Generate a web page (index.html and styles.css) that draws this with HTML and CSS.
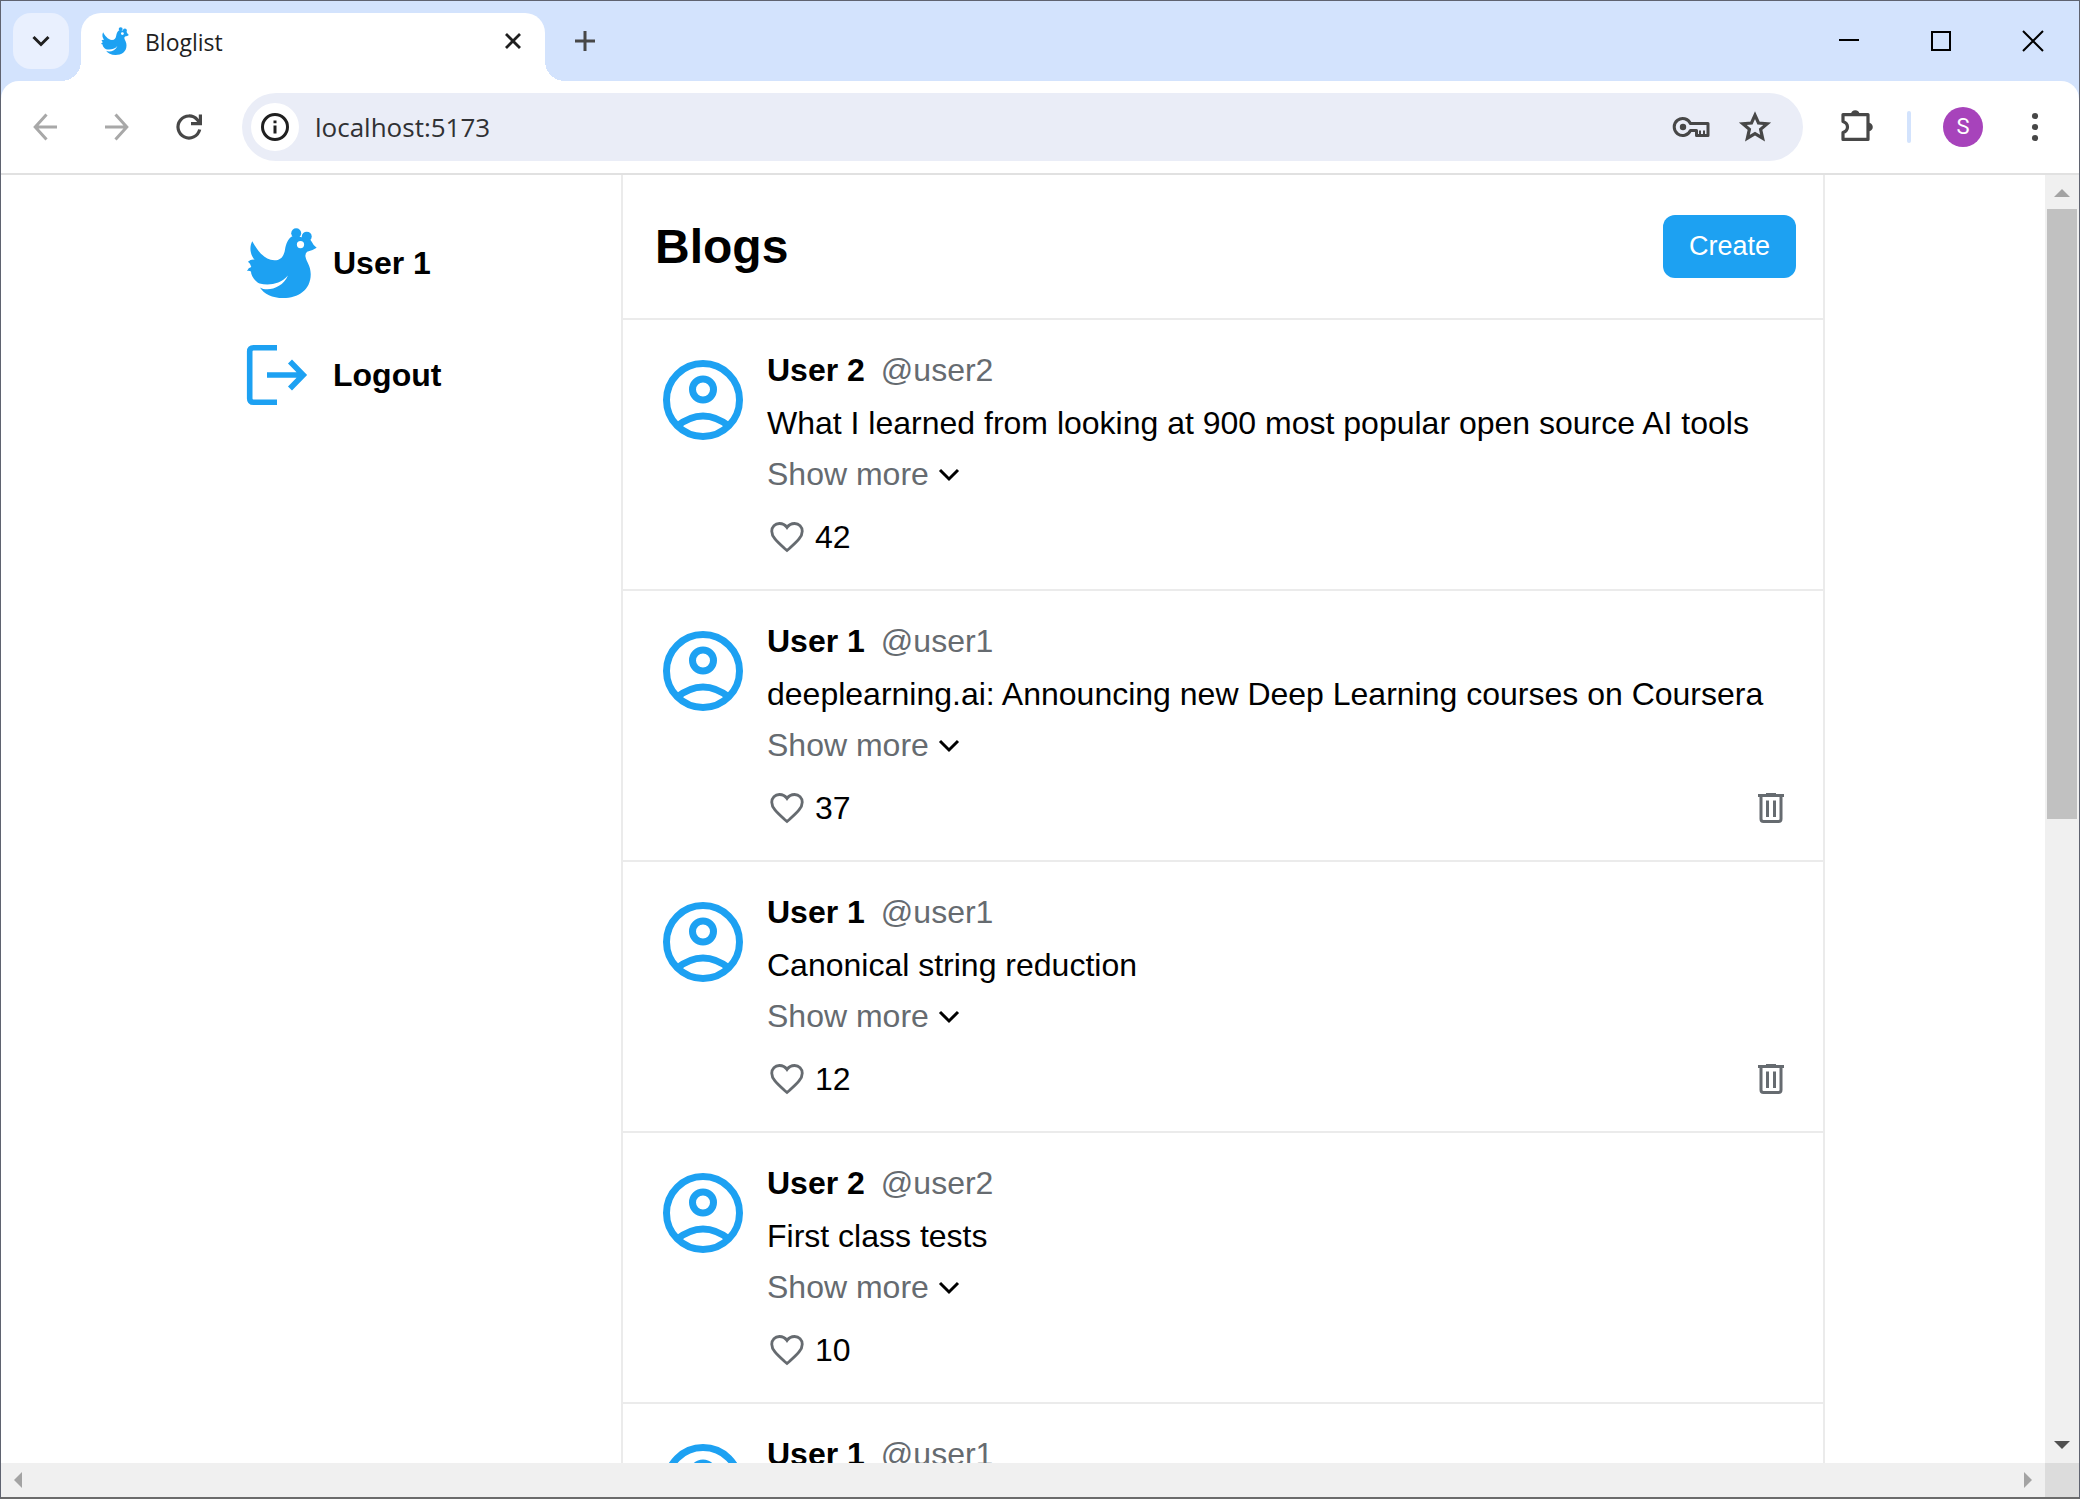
FILE: index.html
```html
<!DOCTYPE html>
<html lang="en">
<head>
<meta charset="utf-8">
<meta name="viewport" content="width=device-width, initial-scale=1">
<title>Bloglist</title>
<link rel="stylesheet" href="styles.css">
</head>
<body>
<svg class="sprite" aria-hidden="true">
  <symbol id="hen" viewBox="0 0 212 212">
    <path fill="currentColor" fill-rule="evenodd" d="M16 40C28 62 50 97 83 98C104 98 112 84 115 66C118 48 124 32 137 25L163 27L190 33Q194 38 196 42Q200 52 211 60Q200 68 182 72Q176 78 177 86C180 104 193 112 193 140C193 188 155 212 110 212C76 212 52 200 39 180C62 194 108 182 124 144C100 172 64 174 38 168C22 162 12 142 12 132Q6 128 0 130Q4 120 13 118Q10 106 3 102Q12 94 23 96C10 82 6 58 16 40ZM162 39A11 11 0 1 0 162 61A11 11 0 1 0 162 39Z"/>
    <circle cx="149" cy="16" r="15" fill="currentColor"/>
    <circle cx="181" cy="26" r="15" fill="currentColor"/>
  </symbol>
  <symbol id="logout" viewBox="0 0 80 80">
    <path fill="none" stroke="currentColor" stroke-width="5.600" d="M40 12.700H16.500Q12.700 12.700 12.700 16.500V63.500Q12.700 67.300 16.500 67.300H40M30 40H67M53 26.500L66.200 40L53 53.500"/>
  </symbol>
  <symbol id="person" viewBox="0 0 96 96">
    <g fill="none" stroke="currentColor" stroke-width="7">
      <circle cx="48" cy="48" r="36.500"/>
      <circle cx="48" cy="37.500" r="10.500"/>
      <path d="M21.500 74.500Q48 53.500 74.500 74.500"/>
    </g>
  </symbol>
  <symbol id="heart" viewBox="0 0 24 24">
    <path fill="none" stroke="currentColor" stroke-width="1.700" d="M12 20.100L10.600 18.900C5.400 14.200 2.850 11.700 2.850 8.500C2.850 5.800 4.800 3.900 7.400 3.900C9.200 3.900 11 4.800 12 6.300C13 4.800 14.800 3.900 16.600 3.900C19.200 3.900 21.150 5.800 21.150 8.500C21.150 11.700 18.600 14.200 13.400 18.900Z"/>
  </symbol>
  <symbol id="chevron" viewBox="0 0 24 24">
    <path fill="none" stroke="currentColor" stroke-width="3" d="M3 7L12 16L21 7"/>
  </symbol>
  <symbol id="trash" viewBox="0 0 40 40">
    <path fill="none" stroke="currentColor" stroke-width="3" d="M7 7.500H33M10 7.500V31Q10 33.500 12.500 33.500H27.500Q30 33.500 30 31V7.500M16.500 12.500V29M23.500 12.500V29"/>
    <path fill="currentColor" d="M15 5H25V8H15Z"/>
  </symbol>
</svg>

<div class="window">
  <header class="strip">
    <button class="tab-search" aria-label="Search tabs">
      <svg width="20" height="20" viewBox="0 0 20 20"><path fill="none" stroke="#1f1f1f" stroke-width="3" d="M2.500 6L10 13.500L17.500 6"/></svg>
    </button>
    <div class="tab">
      <svg class="favicon"><use href="#hen"/></svg>
      <span class="tab-title">Bloglist</span>
      <button class="tab-close" aria-label="Close tab">
        <svg width="16" height="16" viewBox="0 0 16 16"><path stroke="#1f1f1f" stroke-width="2.800" d="M1 1L15 15M15 1L1 15"/></svg>
      </button>
    </div>
    <button class="new-tab" aria-label="New tab">
      <svg width="20" height="20" viewBox="0 0 20 20"><path stroke="#474747" stroke-width="3" d="M10 0V20M0 10H20"/></svg>
    </button>
    <div class="window-controls">
      <button aria-label="Minimize"><svg width="20" height="20" viewBox="0 0 20 20"><path stroke="#000" stroke-width="2" d="M0 9H20"/></svg></button>
      <button aria-label="Maximize"><svg width="20" height="20" viewBox="0 0 20 20"><rect x="1" y="1" width="18" height="18" fill="none" stroke="#000" stroke-width="2"/></svg></button>
      <button aria-label="Close"><svg width="20" height="20" viewBox="0 0 20 20"><path stroke="#000" stroke-width="2" d="M0 0L20 20M20 0L0 20"/></svg></button>
    </div>
  </header>

  <div class="toolbar-wrap">
  <nav class="toolbar" aria-label="Browser">
    <button class="tool faded" aria-label="Back">
      <svg width="24" height="28" viewBox="0 0 24 28"><path fill="none" stroke="currentColor" stroke-width="3" d="M24 14H2.500M13.500 1.500L2.200 14L13.500 26.500"/></svg>
    </button>
    <button class="tool faded" aria-label="Forward">
      <svg width="24" height="28" viewBox="0 0 24 28"><path fill="none" stroke="currentColor" stroke-width="3" d="M0 14H21.500M10.500 1.500L21.800 14L10.500 26.500"/></svg>
    </button>
    <button class="tool" aria-label="Reload">
      <svg width="26" height="26" viewBox="0 0 26 26"><path fill="none" stroke="currentColor" stroke-width="3.200" d="M23.700 15.500A11 11 0 1 1 21.500 6L24 9"/><path fill="none" stroke="currentColor" stroke-width="3.200" d="M24.400 0.500V9.600H15"/></svg>
    </button>
    <div class="omnibox">
      <button class="site-info" aria-label="View site information">
        <svg width="28" height="28" viewBox="0 0 28 28"><circle cx="14" cy="14" r="12.500" fill="none" stroke="#1f1f1f" stroke-width="3"/><path stroke="#1f1f1f" stroke-width="3" d="M14 12.500V20.500M14 7.500V10.300"/></svg>
      </button>
      <input class="address" type="text" aria-label="Address" value="localhost:5173">
      <button class="omni-action" aria-label="Passwords">
        <svg width="36" height="22" viewBox="0 0 36 22"><path fill="none" stroke="currentColor" stroke-width="3" stroke-linejoin="round" d="M17.500 7.600A8.500 8.500 0 1 0 17.500 14.400H23.500V19.500H35V7.600Z"/><circle cx="10" cy="11" r="3.200" fill="currentColor"/><path stroke="currentColor" stroke-width="2" d="M27 14.500V19M31 14.500V19"/></svg>
      </button>
      <button class="omni-action" aria-label="Bookmark this tab">
        <svg width="32" height="32" viewBox="0 0 32 32"><path fill="none" stroke="currentColor" stroke-width="3.200" d="M16 4.200L19.500 12L28.200 12.700L21.600 18.400L23.600 27.200L16 22.600L8.400 27.200L10.400 18.400L3.800 12.700L12.500 12Z"/></svg>
      </button>
    </div>
    <button class="tool extensions" aria-label="Extensions">
      <svg width="34" height="36" viewBox="0 0 34 36"><path fill="none" stroke="currentColor" stroke-width="3.200" stroke-linejoin="round" d="M3 5.600H28V30.400H3V23.500Q7.500 22 7.500 18Q7.500 14 3 12.500Z"/><path fill="currentColor" d="M11 5A4.300 4.300 0 0 1 19.500 5ZM28.500 13.700A4.300 4.300 0 0 1 28.500 22.300Z"/></svg>
    </button>
    <span class="divider"></span>
    <button class="profile" aria-label="Profile">S</button>
    <button class="tool" aria-label="Menu">
      <svg width="8" height="30" viewBox="0 0 8 30"><g fill="currentColor"><circle cx="4" cy="4" r="3.100"/><circle cx="4" cy="15" r="3.100"/><circle cx="4" cy="26" r="3.100"/></g></svg>
    </button>
  </nav>
  </div>

  <div class="viewport">
    <div class="page">
      <aside class="sidebar">
        <a class="side-link" href="#"><svg class="side-icon hen"><use href="#hen"/></svg>User 1</a>
        <a class="side-link" href="#"><svg class="side-icon"><use href="#logout"/></svg>Logout</a>
      </aside>
      <main class="feed">
        <div class="feed-head">
          <h1>Blogs</h1>
          <button class="create">Create</button>
        </div>

        <article class="post">
          <svg class="avatar"><use href="#person"/></svg>
          <div class="post-body">
            <div class="meta"><strong>User 2</strong><span class="handle">@user2</span></div>
            <p class="title">What I learned from looking at 900 most popular open source AI tools</p>
            <button class="more">Show more<svg><use href="#chevron"/></svg></button>
            <div class="actions"><button class="like" aria-label="Like"><svg><use href="#heart"/></svg></button><span>42</span></div>
          </div>
        </article>

        <article class="post">
          <svg class="avatar"><use href="#person"/></svg>
          <div class="post-body">
            <div class="meta"><strong>User 1</strong><span class="handle">@user1</span></div>
            <p class="title">deeplearning.ai: Announcing new Deep Learning courses on Coursera</p>
            <button class="more">Show more<svg><use href="#chevron"/></svg></button>
            <div class="actions"><button class="like" aria-label="Like"><svg><use href="#heart"/></svg></button><span>37</span><button class="delete" aria-label="Delete"><svg><use href="#trash"/></svg></button></div>
          </div>
        </article>

        <article class="post">
          <svg class="avatar"><use href="#person"/></svg>
          <div class="post-body">
            <div class="meta"><strong>User 1</strong><span class="handle">@user1</span></div>
            <p class="title">Canonical string reduction</p>
            <button class="more">Show more<svg><use href="#chevron"/></svg></button>
            <div class="actions"><button class="like" aria-label="Like"><svg><use href="#heart"/></svg></button><span>12</span><button class="delete" aria-label="Delete"><svg><use href="#trash"/></svg></button></div>
          </div>
        </article>

        <article class="post">
          <svg class="avatar"><use href="#person"/></svg>
          <div class="post-body">
            <div class="meta"><strong>User 2</strong><span class="handle">@user2</span></div>
            <p class="title">First class tests</p>
            <button class="more">Show more<svg><use href="#chevron"/></svg></button>
            <div class="actions"><button class="like" aria-label="Like"><svg><use href="#heart"/></svg></button><span>10</span></div>
          </div>
        </article>

        <article class="post">
          <svg class="avatar"><use href="#person"/></svg>
          <div class="post-body">
            <div class="meta"><strong>User 1</strong><span class="handle">@user1</span></div>
          </div>
        </article>
      </main>
    </div>
    <div class="scroll-y">
      <svg width="16" height="8" viewBox="0 0 16 8"><path fill="#a3a3a3" d="M0 8L8 0L16 8Z"/></svg>
      <div class="track"><div class="thumb"></div></div>
      <svg width="16" height="8" viewBox="0 0 16 8"><path fill="#505050" d="M0 0L8 8L16 0Z"/></svg>
    </div>
    <div class="scroll-x">
      <svg width="8" height="16" viewBox="0 0 8 16"><path fill="#a3a3a3" d="M8 0L0 8L8 16Z"/></svg>
      <svg width="8" height="16" viewBox="0 0 8 16"><path fill="#a3a3a3" d="M0 0L8 8L0 16Z"/></svg>
    </div>
    <div class="scroll-corner"></div>
  </div>
</div>
</body>
</html>
```

FILE: styles.css
```css
* {
  box-sizing: border-box;
}

body {
  margin: 0;
  background: #fff;
  color: #000;
  font: 32px/37px "Liberation Sans", Arial, sans-serif;
}

button {
  margin: 0;
  padding: 0;
  border: 0;
  background: none;
  color: inherit;
  font: inherit;
  cursor: pointer;
}

svg {
  display: block;
  flex: none;
  overflow: visible;
}

h1,
p {
  margin: 0;
}

.sprite {
  position: absolute;
  width: 0;
  height: 0;
}

/* Browser window */

.window {
  display: flex;
  flex-direction: column;
  height: 100vh;
  border: 1px solid #5f6370;
  border-bottom: 2px solid #6b6b6b;
}

.strip {
  display: flex;
  flex: none;
  height: 80px;
  padding: 12px 0 0 12px;
  background: #d3e3fd;
}

.strip button {
  display: grid;
  place-items: center;
}

.tab-search {
  width: 56px;
  height: 56px;
  border-radius: 18px;
  background: #e9f0fe;
}

.tab {
  position: relative;
  display: flex;
  align-items: center;
  width: 464px;
  margin-left: 12px;
  padding: 0 20px 12px;
  border-radius: 20px 20px 0 0;
  background: #fff;
}

.tab::before,
.tab::after {
  content: "";
  position: absolute;
  bottom: 0;
  width: 20px;
  height: 20px;
}

.tab::before {
  right: 100%;
  background: radial-gradient(circle at 0 0, transparent 20px, #fff 20px);
}

.tab::after {
  left: 100%;
  background: radial-gradient(circle at 100% 0, transparent 20px, #fff 20px);
}

.favicon {
  width: 28px;
  height: 28px;
  color: #1da1f2;
}

.tab-title {
  flex: 1;
  margin-left: 16px;
  padding-top: 2px;
  color: #1f1f1f;
  font: 23px/32px "Open Sans", "Noto Sans", sans-serif;
}

.tab-close {
  width: 24px;
  height: 24px;
}

.new-tab {
  width: 56px;
  height: 56px;
  margin-left: 12px;
}

.window-controls {
  display: flex;
  height: 56px;
  margin-left: auto;
}

.window-controls button {
  width: 92px;
}

.toolbar-wrap {
  flex: none;
  background: #d3e3fd;
}

.toolbar {
  display: flex;
  align-items: center;
  height: 94px;
  padding: 0 8px;
  border-bottom: 2px solid #e1e1e1;
  border-radius: 18px 18px 0 0;
  background: #fff;
  color: #474747;
}

.tool {
  display: grid;
  flex: none;
  place-items: center;
  width: 72px;
  height: 68px;
}

.faded {
  color: #a8a8a8;
}

.omnibox {
  display: flex;
  flex: 1;
  align-items: center;
  height: 68px;
  margin: 0 18px 0 17px;
  padding: 0 16px 0 9px;
  border-radius: 34px;
  background: #eaedf7;
}

.site-info {
  display: grid;
  flex: none;
  place-items: center;
  width: 48px;
  height: 48px;
  border-radius: 50%;
  background: #fff;
}

.address {
  flex: 1;
  min-width: 0;
  margin-left: 16px;
  padding: 0;
  border: 0;
  outline: 0;
  background: none;
  color: #303134;
  font: 26px/36px "Open Sans", "Noto Sans", sans-serif;
}

.omni-action {
  display: grid;
  place-items: center;
  width: 64px;
  height: 48px;
}

.divider {
  width: 4px;
  height: 32px;
  margin: 0 32px 0 14px;
  border-radius: 2px;
  background: #d3e3fd;
}

.profile {
  width: 40px;
  height: 40px;
  margin-right: 16px;
  border-radius: 50%;
  background: #a743bb;
  color: #fff;
  font: 22px/40px Roboto, sans-serif;
}

/* Scrollable area */

.viewport {
  display: grid;
  flex: 1;
  grid-template: minmax(0, 1fr) 34px / minmax(0, 1fr) 34px;
  min-height: 0;
}

.scroll-y {
  display: flex;
  grid-area: 1 / 2;
  flex-direction: column;
  align-items: center;
  padding: 14px 0;
  background: #f0f0f0;
}

.track {
  flex: 1;
  align-self: stretch;
  margin: 12px 2px;
}

.thumb {
  height: 50%;
  background: #c1c1c1;
}

.scroll-x {
  display: flex;
  grid-area: 2 / 1;
  align-items: center;
  justify-content: space-between;
  padding: 0 13px;
  background: #f0f0f0;
}

.scroll-corner {
  grid-area: 2 / 2;
  background: #dcdcdc;
}

/* Bloglist page */

.page {
  display: grid;
  grid-area: 1 / 1;
  grid-template-columns: 400px 1fr;
  width: 100%;
  max-width: 1604px;
  margin: 0 auto;
  overflow: hidden;
}

.sidebar {
  display: flex;
  flex-direction: column;
  gap: 32px;
  padding: 48px 16px;
}

.side-link {
  display: flex;
  align-items: center;
  gap: 16px;
  color: #000;
  font-weight: 700;
  text-decoration: none;
}

.side-icon {
  width: 80px;
  height: 80px;
  color: #1da1f2;
}

.side-icon.hen {
  padding: 5px 0 5px 10px;
}

.feed {
  border: solid #ebebeb;
  border-width: 0 2px;
}

.feed-head {
  display: flex;
  align-items: center;
  justify-content: space-between;
  padding: 40px 27px 40px 32px;
  border-bottom: 2px solid #ebebeb;
}

h1 {
  font-size: 48px;
  line-height: 56px;
}

.create {
  padding: 16px 26px;
  border-radius: 12px;
  background: #1da1f2;
  color: #fff;
  font-size: 27px;
  line-height: 31px;
}

.post {
  display: flex;
  gap: 16px;
  padding: 32px 32px 28px;
  border-bottom: 2px solid #ebebeb;
}

.avatar {
  width: 96px;
  height: 96px;
  color: #1da1f2;
}

.post-body {
  flex: 1;
  min-width: 0;
}

.meta {
  display: flex;
  gap: 16px;
  margin-bottom: 16px;
}

.handle,
.more {
  color: #666b70;
}

.title {
  margin-bottom: 14px;
}

.more {
  display: flex;
  align-items: center;
  gap: 8px;
  margin-bottom: 20px;
}

.more svg {
  width: 24px;
  height: 24px;
  color: #000;
}

.actions {
  display: flex;
  align-items: center;
  gap: 8px;
  height: 48px;
}

.like,
.delete {
  color: #666b70;
}

.delete {
  margin-left: auto;
}

.like svg,
.delete svg {
  width: 40px;
  height: 40px;
}
```
